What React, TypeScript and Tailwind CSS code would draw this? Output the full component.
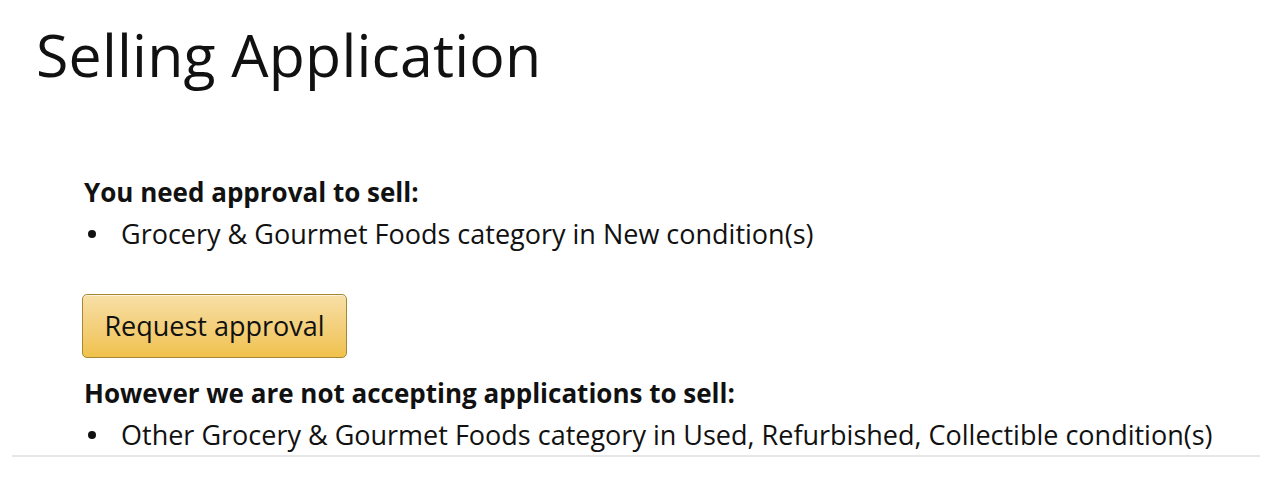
function Bullet({ children }: { children: React.ReactNode }) {
  return (
    <li className="flex items-center">
      <span className="w-[37px] shrink-0 flex items-center pl-[4px]">
        <span className="block w-[8px] h-[8px] rounded-full bg-[#111]" />
      </span>
      <span>{children}</span>
    </li>
  );
}

export default function App() {
  return (
    <div className="w-[1272px] h-[488px] bg-white text-[#111] font-['Open_Sans',sans-serif]">
      <div className="pl-[36px] pt-[14px]">
        <h1 className="text-[59px] leading-[80px] font-normal tracking-[0.2px]">Selling Application</h1>
      </div>
      <div className="pl-[84px] pt-[78px]">
        <div className="text-[26px] leading-[41px] font-bold">You need approval to sell:</div>
        <ul className="text-[27px] leading-[41px]">
          <Bullet>Grocery &amp; Gourmet Foods category in New condition(s)</Bullet>
        </ul>
        <button className="mt-[40px] -ml-[2px] h-[64px] w-[265px] rounded-[5px] border border-[#a88734] bg-gradient-to-b from-[#f7dfa5] to-[#f0c14b] text-[27px] shadow-[inset_0_1px_0_rgba(255,255,255,0.6)]">
          Request approval
        </button>
        <div className="mt-[15px] text-[26px] leading-[41px] font-bold">However we are not accepting applications to sell:</div>
        <ul className="text-[27px] leading-[41px]">
          <Bullet>Other Grocery &amp; Gourmet Foods category in Used, Refurbished, Collectible condition(s)</Bullet>
        </ul>
      </div>
      <div className="mx-[12px] h-[2px] bg-[#e7e7e7]" />
    </div>
  );
}
